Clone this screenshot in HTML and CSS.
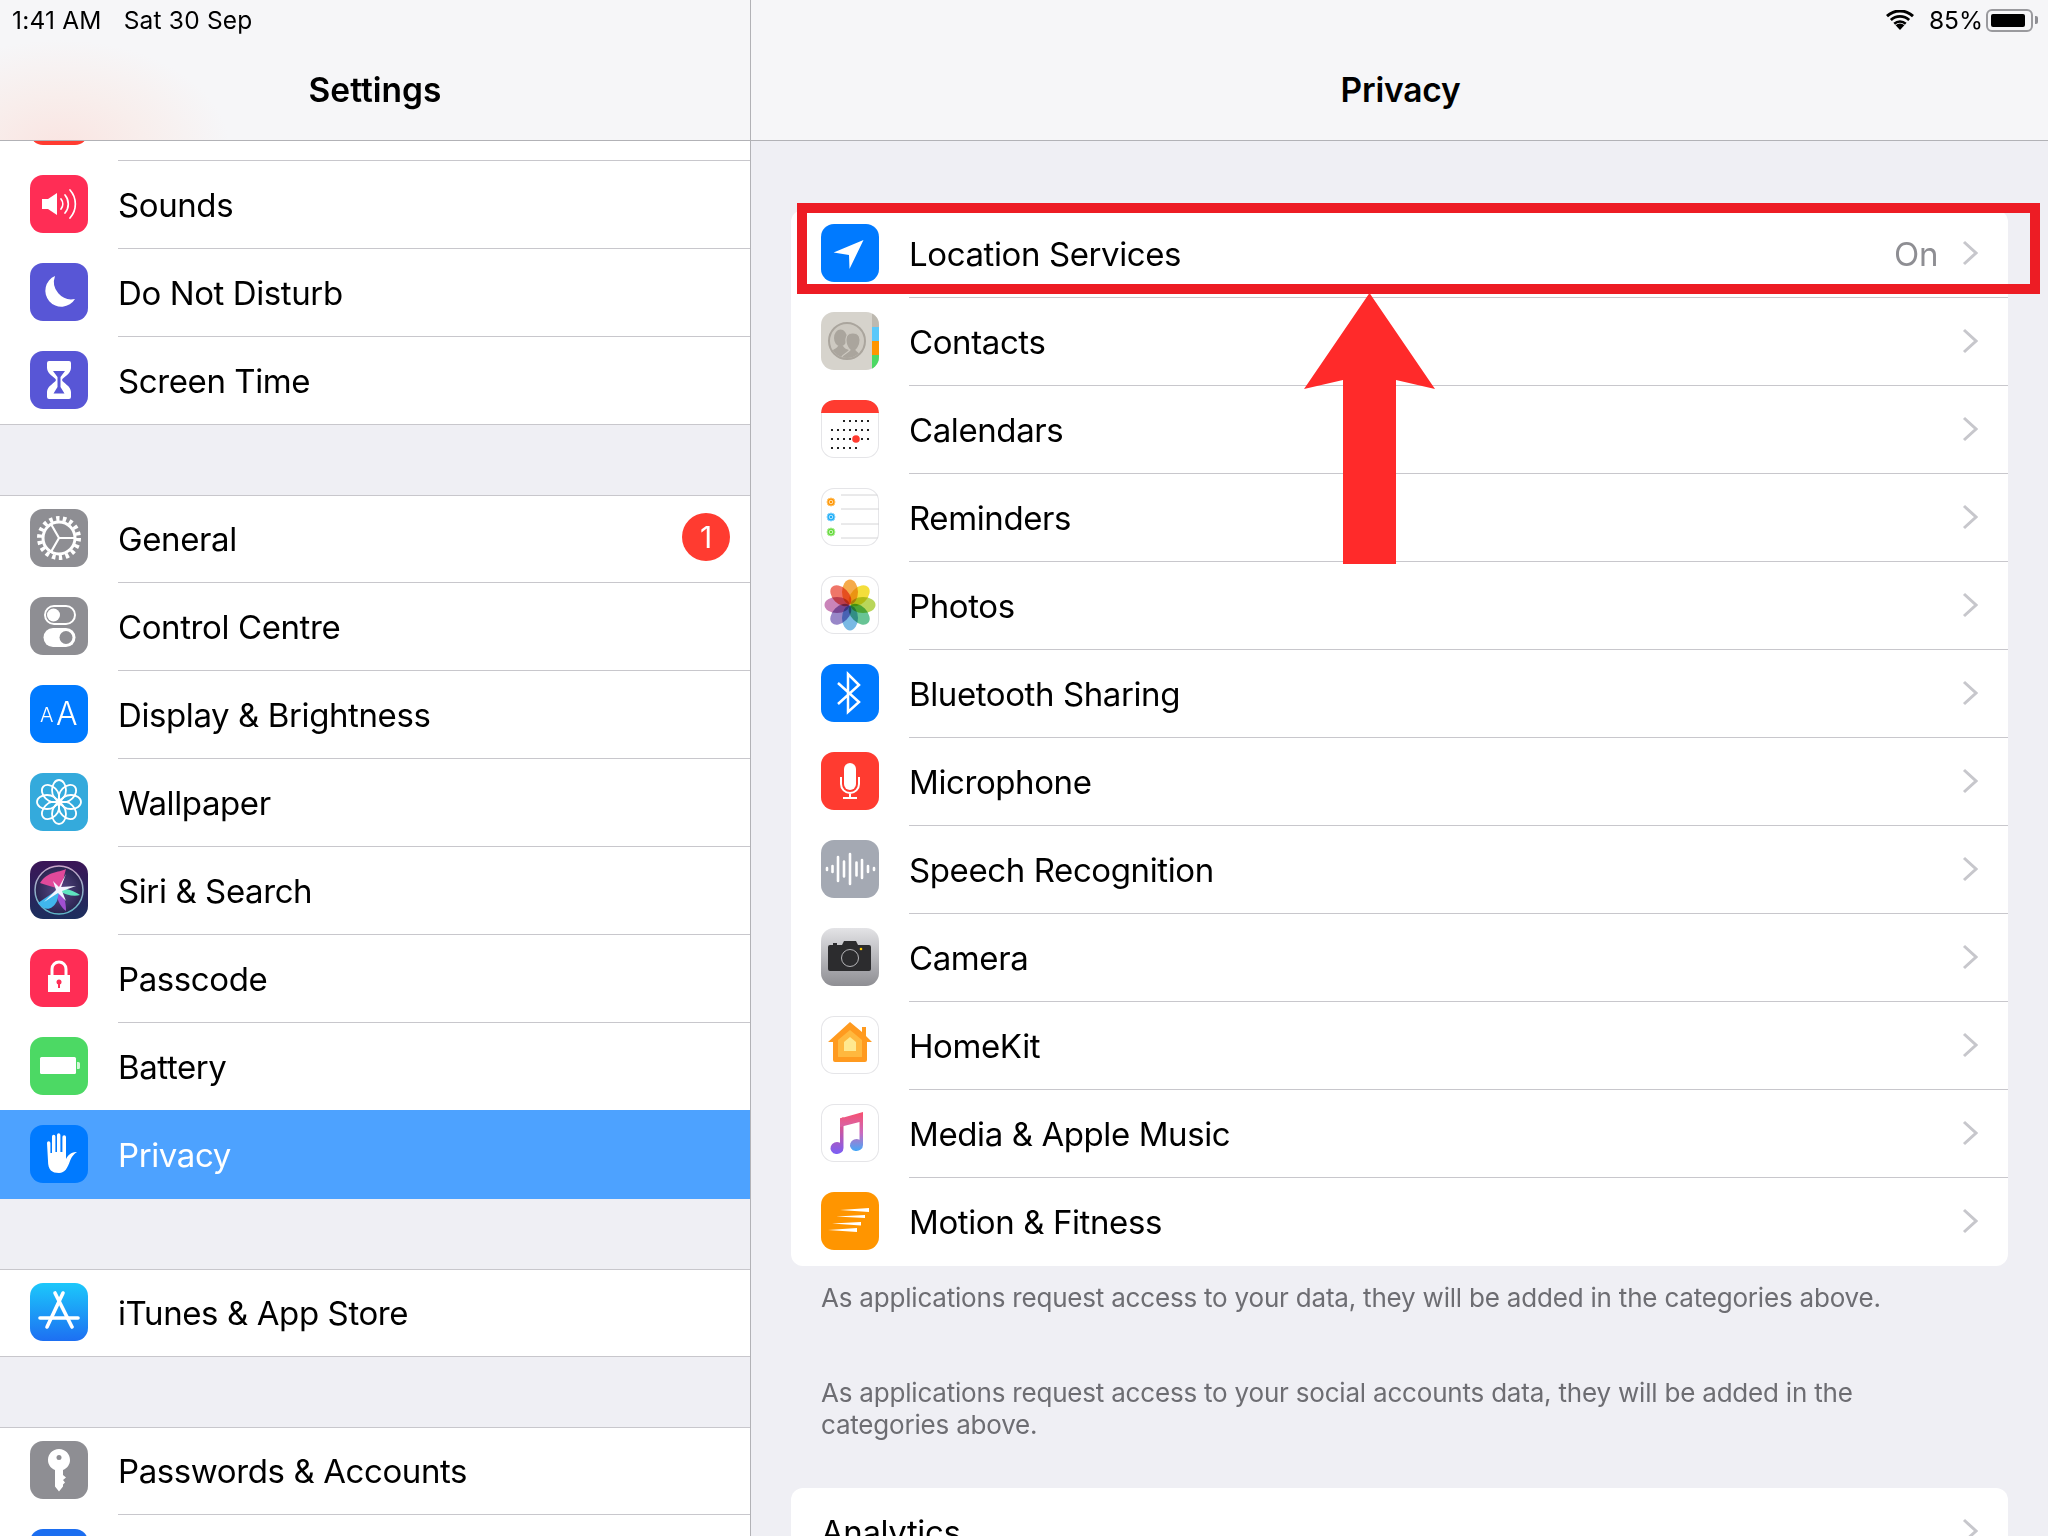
FILE: index.html
```html
<!DOCTYPE html>
<html lang="en">
<head>
<meta charset="utf-8">
<title>Settings - Privacy</title>
<link rel="stylesheet" href="styles.css">
</head>
<body>
<div class="statusbar">
  <div class="status-left"><span>1:41 AM</span><span>Sat 30 Sep</span></div>
  <div class="status-right">
    <svg class="wifi" viewBox="0 0 28 20"><path d="M14 20 L9.6 15.2 A6.5 6.5 0 0 1 18.4 15.2Z"/><path d="M7.4 12.8 A9.8 9.8 0 0 1 20.6 12.8 L18.9 14.7 A7.2 7.2 0 0 0 9.1 14.7Z"/><path d="M3.9 9 A15 15 0 0 1 24.1 9 L22.2 11 A12.2 12.2 0 0 0 5.8 11Z"/><path d="M0 5 A20.5 20.5 0 0 1 28 5 L26 7.2 A17.6 17.6 0 0 0 2 7.2Z"/></svg>
    <span class="pct">85%</span>
    <div class="battery"><div class="battery-level"></div></div>
    <div class="battery-nub"></div>
  </div>
</div>

<aside class="sidebar">
  <header class="navbar navbar-tint"><h1>Settings</h1></header>
  <div class="list">
    <section class="group">
      <div class="row"><div class="icon bg-red"></div><div class="row-body"></div></div>
      <div class="row"><div class="icon bg-pink"><svg viewBox="0 0 58 58"><path fill="#fff" d="M12 24h6l9-6v22l-9-6h-6z"/><g fill="none" stroke="#fff" stroke-width="1.7" stroke-linecap="round"><path d="M31 24a8 8 0 0 1 0 10"/><path d="M35 20a14 14 0 0 1 0 18"/><path d="M40 15a21 21 0 0 1 0 28"/></g></svg></div><div class="row-body"><span>Sounds</span></div></div>
      <div class="row"><div class="icon bg-indigo"><svg viewBox="0 0 58 58"><path fill="#fff" d="M25 13A16 16 0 1 0 45 36 A17.5 17.5 0 0 1 25 13z"/></svg></div><div class="row-body"><span>Do Not Disturb</span></div></div>
      <div class="row"><div class="icon bg-indigo"><svg viewBox="0 0 58 58"><path fill="#fff" d="M19 10h20a2 2 0 0 1 2 2v5c0 6-8 9-9 12 1 3 9 6 9 12v5a2 2 0 0 1-2 2H19a2 2 0 0 1-2-2v-5c0-6 8-9 9-12-1-3-9-6-9-12v-5a2 2 0 0 1 2-2z"/><path fill="#5856d6" d="M23 20h12l-4.500 6v10l4 6.500h-11l4-6.500V26z"/></svg></div><div class="row-body"><span>Screen Time</span></div></div>
    </section>

    <section class="group">
      <div class="row"><div class="icon bg-gray"><svg viewBox="0 0 58 58"><g fill="none" stroke="#fff"><circle cx="29" cy="29" r="19.500" stroke-width="5" stroke-dasharray="3.400 3.400"/><circle cx="29" cy="29" r="16" stroke-width="3"/><path stroke-width="2.200" d="M46 29H29L20.500 14.300M29 29l-8.500 14.700"/></g></svg></div><div class="row-body"><span>General</span><span class="badge">1</span></div></div>
      <div class="row"><div class="icon bg-gray"><svg viewBox="0 0 58 58"><rect x="15" y="9" width="30" height="18" rx="9" fill="none" stroke="#fff" stroke-width="2"/><circle cx="23.500" cy="18" r="6.500" fill="#fff"/><rect x="13.500" y="31" width="32" height="19" rx="9.500" fill="#fff"/><circle cx="36" cy="40.500" r="6.500" fill="#8e8e93"/></svg></div><div class="row-body"><span>Control Centre</span></div></div>
      <div class="row"><div class="icon bg-blue"><svg viewBox="0 0 58 58"><text class="aa-small" x="10" y="37">A</text><text class="aa-big" x="26" y="40">A</text></svg></div><div class="row-body"><span>Display &amp; Brightness</span></div></div>
      <div class="row"><div class="icon bg-sky"><svg viewBox="0 0 58 58"><g fill="none" stroke="#fff" stroke-width="1.800"><ellipse cx="29" cy="17" rx="7" ry="10"/><ellipse cx="29" cy="17" rx="7" ry="10" transform="rotate(45 29 29)"/><ellipse cx="29" cy="17" rx="7" ry="10" transform="rotate(90 29 29)"/><ellipse cx="29" cy="17" rx="7" ry="10" transform="rotate(135 29 29)"/><ellipse cx="29" cy="17" rx="7" ry="10" transform="rotate(180 29 29)"/><ellipse cx="29" cy="17" rx="7" ry="10" transform="rotate(225 29 29)"/><ellipse cx="29" cy="17" rx="7" ry="10" transform="rotate(270 29 29)"/><ellipse cx="29" cy="17" rx="7" ry="10" transform="rotate(315 29 29)"/></g><circle cx="29" cy="29" r="3" fill="#fff"/></svg></div><div class="row-body"><span>Wallpaper</span></div></div>
      <div class="row"><div class="icon bg-siri"><svg viewBox="0 0 58 58"><defs><linearGradient id="siriring" x1="0" y1="0" x2="0" y2="1"><stop offset="0" stop-color="#c9a6c9"/><stop offset="1" stop-color="#5fb6c6"/></linearGradient><radialGradient id="siridisc"><stop offset="0" stop-color="#5a4a88"/><stop offset="1" stop-color="#2a2450"/></radialGradient><filter id="soft"><feGaussianBlur stdDeviation="0.700"/></filter></defs><circle cx="29" cy="29" r="24" fill="url(#siridisc)" stroke="url(#siriring)" stroke-width="1.500"/><g filter="url(#soft)"><path fill="#e0489a" d="M10 22C18 10 28 12 36 8 33 18 33 24 30 28 23 26 16 24 10 22z"/><path fill="#a04fd0" d="M30 28C34 34 36 42 36 50 30 46 26 36 26 30z"/><path fill="#3fb6ec" d="M30 27L8 42C14 50 22 50 27 40z"/><path fill="#5fe4c0" d="M29 27C36 27 44 30 50 34 44 36 36 34 29 30z"/><path fill="#f2f5ff" d="M36 13L31 26 46 25 32 30 36 40 28 32 14 41 26 29 23 20 29 26z"/></g></svg></div><div class="row-body"><span>Siri &amp; Search</span></div></div>
      <div class="row"><div class="icon bg-pink"><svg viewBox="0 0 58 58"><path fill="none" stroke="#fff" stroke-width="3" d="M22 27v-7a7 7 0 0 1 14 0v7"/><rect x="18" y="26" width="22" height="17" fill="#fff"/><circle cx="29" cy="33" r="2.500" fill="#ff2d55"/><rect x="28" y="34" width="2" height="5" fill="#ff2d55"/></svg></div><div class="row-body"><span>Passcode</span></div></div>
      <div class="row"><div class="icon bg-green"><svg viewBox="0 0 58 58"><rect x="10" y="20" width="36" height="17" rx="1.500" fill="#fff"/><path fill="#fff" opacity=".75" d="M47 25h1.500a1.500 1.500 0 0 1 1.500 1.500v4a1.500 1.500 0 0 1-1.500 1.500H47z"/></svg></div><div class="row-body"><span>Battery</span></div></div>
      <div class="row row-selected"><div class="icon bg-blue"><svg viewBox="0 0 58 58"><path fill="#fff" d="M17 18a1.700 1.700 0 0 1 3.400 0V28H22V11.500a1.700 1.700 0 0 1 3.400 0V27H27V10a1.700 1.700 0 0 1 3.400 0V27h2V12a1.800 1.800 0 0 1 3.600 0V34c1.500-3 5-7.500 11-7-3 2-5 4-7 9-2.500 7-5 12-11 12-7 0-11-3-11-12z"/></svg></div><div class="row-body"><span>Privacy</span></div></div>
    </section>

    <section class="group">
      <div class="row"><div class="icon bg-appstore"><svg viewBox="0 0 58 58"><g stroke="#fff" stroke-width="3.600" stroke-linecap="round" fill="none"><path d="M10 35h38"/><path d="M33 10L17 44"/><path d="M25 10l17 34"/></g></svg></div><div class="row-body"><span>iTunes &amp; App Store</span></div></div>
    </section>

    <section class="group">
      <div class="row"><div class="icon bg-gray"><svg viewBox="0 0 58 58"><path fill="#fff" d="M29 8c6.500 0 11 5 11 11 0 4.500-2.500 8-7 10v5l3 2.500-3 2.500 2 2.500-2 2v2l-4 5-4-5V29c-4.500-2-7-5.500-7-10 0-6 4.500-11 11-11z"/><circle cx="29" cy="16.500" r="2.500" fill="#8e8e93"/></svg></div><div class="row-body"><span>Passwords &amp; Accounts</span></div></div>
      <div class="row"><div class="icon bg-mail"></div><div class="row-body"></div></div>
    </section>
  </div>
</aside>

<main class="pane">
  <header class="navbar"><h1>Privacy</h1></header>
  <div class="pane-content">
    <section class="card">
      <div class="row"><div class="icon bg-blue"><svg viewBox="0 0 58 58"><path fill="#fff" d="M42.500 16L12.600 28.500 28 31 28.500 45z"/></svg></div><div class="row-body"><span>Location Services</span><span class="value">On</span><svg class="chevron" viewBox="0 0 16 26"><path d="M2 2l12 11L2 24"/></svg></div></div>
      <div class="row"><div class="icon bg-contacts"><svg viewBox="0 0 58 58"><defs><clipPath id="disc"><circle cx="26" cy="29" r="17"/></clipPath></defs><rect x="51" width="7" height="15" fill="#bdb9b0"/><rect x="51" y="15" width="7" height="14" fill="#5ac8fa"/><rect x="51" y="29" width="7" height="14" fill="#ff9500"/><rect x="51" y="43" width="7" height="15" fill="#4cd964"/><circle cx="26" cy="29" r="18" fill="#cdc9c1" stroke="#aaa59d" stroke-width="2"/><g clip-path="url(#disc)" fill="#aaa59d"><ellipse cx="19.500" cy="26" rx="6.500" ry="8.500"/><path d="M6 43c2-5 9-5 11-9h5c1 2 3 3 6 4l-8 10z"/><g stroke="#cdc9c1" stroke-width="1.200"><path d="M19 49c1-7 8-8 10-11-2-2-4.500-6-4-11 .5-8 13-8 14 0 .5 5-2 9-4 11 2 3 8 4 10 11z"/></g></g></svg></div><div class="row-body"><span>Contacts</span><svg class="chevron" viewBox="0 0 16 26"><path d="M2 2l12 11L2 24"/></svg></div></div>
      <div class="row"><div class="icon bg-white"><svg viewBox="0 0 58 58"><path fill="#ff3b30" d="M0 13V13A13 13 0 0 1 13 0H45A13 13 0 0 1 58 13z"/><g stroke="#222" stroke-width="2" stroke-dasharray="2 4"><path d="M22 21H50"/><path d="M10 30H50"/><path d="M10 39H50"/><path d="M10 48H36"/></g><circle cx="35" cy="39" r="3.800" fill="#ff3b30"/></svg></div><div class="row-body"><span>Calendars</span><svg class="chevron" viewBox="0 0 16 26"><path d="M2 2l12 11L2 24"/></svg></div></div>
      <div class="row"><div class="icon bg-white"><svg viewBox="0 0 58 58"><g stroke="#d4d4d6" stroke-width="1"><path d="M20 7H58"/><path d="M20 21H58"/><path d="M20 36H58"/><path d="M20 50H58"/></g><circle cx="10" cy="14" r="4" fill="#ff9500" stroke="#ffc36b"/><circle cx="10" cy="14" r="1.800" fill="#ff9500" stroke="#fff" stroke-width=".7"/><circle cx="10" cy="29" r="4" fill="#1badf8" stroke="#8ad4fb"/><circle cx="10" cy="29" r="1.800" fill="#1badf8" stroke="#fff" stroke-width=".7"/><circle cx="10" cy="44" r="4" fill="#63da38" stroke="#b0ec9b"/><circle cx="10" cy="44" r="1.800" fill="#63da38" stroke="#fff" stroke-width=".7"/></svg></div><div class="row-body"><span>Reminders</span><svg class="chevron" viewBox="0 0 16 26"><path d="M2 2l12 11L2 24"/></svg></div></div>
      <div class="row"><div class="icon bg-white"><svg viewBox="0 0 58 58"><g class="petals"><ellipse cx="29" cy="16" rx="8" ry="12.500" fill="#f5a33a"/><ellipse cx="29" cy="16" rx="8" ry="12.500" fill="#f4dc2a" transform="rotate(45 29 29)"/><ellipse cx="29" cy="16" rx="8" ry="12.500" fill="#b3d34c" transform="rotate(90 29 29)"/><ellipse cx="29" cy="16" rx="8" ry="12.500" fill="#5bbf8c" transform="rotate(135 29 29)"/><ellipse cx="29" cy="16" rx="8" ry="12.500" fill="#6db3e2" transform="rotate(180 29 29)"/><ellipse cx="29" cy="16" rx="8" ry="12.500" fill="#8f7dc4" transform="rotate(225 29 29)"/><ellipse cx="29" cy="16" rx="8" ry="12.500" fill="#c67ab3" transform="rotate(270 29 29)"/><ellipse cx="29" cy="16" rx="8" ry="12.500" fill="#ee6a5c" transform="rotate(315 29 29)"/></g></svg></div><div class="row-body"><span>Photos</span><svg class="chevron" viewBox="0 0 16 26"><path d="M2 2l12 11L2 24"/></svg></div></div>
      <div class="row"><div class="icon bg-blue"><svg viewBox="0 0 58 58"><path fill="none" stroke="#fff" stroke-width="2.500" d="M17 19l21 19-11 10V10l11 11-21 19"/></svg></div><div class="row-body"><span>Bluetooth Sharing</span><svg class="chevron" viewBox="0 0 16 26"><path d="M2 2l12 11L2 24"/></svg></div></div>
      <div class="row"><div class="icon bg-red"><svg viewBox="0 0 58 58"><rect x="23" y="11" width="12" height="27" rx="6" fill="#fff"/><path fill="none" stroke="#fff" stroke-width="2" d="M20 25v7a9 9 0 0 0 18 0v-7M29 41v5M22 46h14"/></svg></div><div class="row-body"><span>Microphone</span><svg class="chevron" viewBox="0 0 16 26"><path d="M2 2l12 11L2 24"/></svg></div></div>
      <div class="row"><div class="icon bg-speech"><svg viewBox="0 0 58 58"><path fill="none" stroke="#fff" stroke-width="2.600" stroke-linecap="round" d="M6 28v2M11.500 26v6M17 17v24M23 21.500v15M29 14v30M35.500 22.500v13M41 20v18M47 26v6M53 28v2"/></svg></div><div class="row-body"><span>Speech Recognition</span><svg class="chevron" viewBox="0 0 16 26"><path d="M2 2l12 11L2 24"/></svg></div></div>
      <div class="row"><div class="icon bg-camera"><svg viewBox="0 0 58 58"><path fill="#2c2c2e" d="M9 17h3v-2h4v2h5l2-4h12l2 4h11a2 2 0 0 1 2 2v22a2 2 0 0 1-2 2H9a2 2 0 0 1-2-2V19a2 2 0 0 1 2-2z"/><circle cx="29" cy="30" r="8.500" fill="none" stroke="#b5b5b8" stroke-width="1"/><circle cx="40" cy="21" r="1.300" fill="#ffcc00"/></svg></div><div class="row-body"><span>Camera</span><svg class="chevron" viewBox="0 0 16 26"><path d="M2 2l12 11L2 24"/></svg></div></div>
      <div class="row"><div class="icon bg-white"><svg viewBox="0 0 58 58"><path fill="#ff9a1f" d="M29 6L41 16V11h4v9l6 6h-5v18a2 2 0 0 1-2 2H14a2 2 0 0 1-2-2V26H7z"/><path fill="#ffb83e" d="M29 14L41 24V41H17V24z"/><path fill="#ffe98f" d="M29 21L35 26V35H23V26z"/></svg></div><div class="row-body"><span>HomeKit</span><svg class="chevron" viewBox="0 0 16 26"><path d="M2 2l12 11L2 24"/></svg></div></div>
      <div class="row"><div class="icon bg-white"><svg viewBox="0 0 58 58"><defs><linearGradient id="noteL" x1="0" y1="0" x2="0" y2="1"><stop offset="0" stop-color="#f9506e"/><stop offset="1" stop-color="#7a5ff6"/></linearGradient><linearGradient id="noteR" x1="0" y1="0" x2="0" y2="1"><stop offset="0" stop-color="#f9506e"/><stop offset=".55" stop-color="#c86bc0"/><stop offset="1" stop-color="#43a8f8"/></linearGradient></defs><path fill="url(#noteL)" d="M19 14.500L22.500 13V44a6.500 6 0 1 1-3.500-5.300z"/><path fill="url(#noteR)" d="M19 14.500L42 8V41a6.500 6 0 1 1-3.500-5.300V18L19 23z"/></svg></div><div class="row-body"><span>Media &amp; Apple Music</span><svg class="chevron" viewBox="0 0 16 26"><path d="M2 2l12 11L2 24"/></svg></div></div>
      <div class="row"><div class="icon bg-orange"><svg viewBox="0 0 58 58"><path fill="#fff" d="M19 18L48 16V20zM15 24.500L44 23V26zM11 31.500L40 30V33.500zM7 38L36 36V40z"/></svg></div><div class="row-body"><span>Motion &amp; Fitness</span><svg class="chevron" viewBox="0 0 16 26"><path d="M2 2l12 11L2 24"/></svg></div></div>
    </section>
    <p class="note note-first">As applications request access to your data, they will be added in the categories above.</p>
    <p class="note note-second">As applications request access to your social accounts data, they will be added in the categories above.</p>
    <section class="card card-plain">
      <div class="row"><div class="row-body"><span>Analytics</span><svg class="chevron" viewBox="0 0 16 26"><path d="M2 2l12 11L2 24"/></svg></div></div>
    </section>
  </div>
  <div class="callout"></div>
  <svg class="arrow" viewBox="0 0 131 271"><path d="M65.500 0L131 96 92 87V271H39V87L0 96z"/></svg>
</main>
</body>
</html>
```

FILE: styles.css
```css
* { box-sizing: border-box; }
html, body { margin: 0; height: 100%; }
body {
  display: flex;
  position: relative;
  width: 2048px;
  height: 1536px;
  overflow: hidden;
  background: #efeff4;
  color: #000;
  font-family: Inter, "Liberation Sans", sans-serif;
  font-size: 33px;
  letter-spacing: -0.4px;
}

.statusbar {
  position: absolute;
  top: 0;
  left: 0;
  right: 0;
  z-index: 5;
  height: 40px;
  padding: 0 10px 0 12px;
  display: flex;
  align-items: center;
  justify-content: space-between;
  font-size: 24.500px;
  letter-spacing: 0;
}
.status-left { display: flex; gap: 22px; letter-spacing: .2px; }
.status-right { display: flex; align-items: center; }
.wifi { width: 28px; height: 20px; margin-right: 15px; }
.pct { margin-right: 3px; letter-spacing: 0; }
.battery {
  width: 47px;
  height: 23px;
  padding: 3px;
  border: 2px solid #9a9a9e;
  border-radius: 6px;
}
.battery-level { width: 34px; height: 100%; background: #000; border-radius: 2px; }
.battery-nub { width: 3px; height: 8px; margin-left: 2px; background: #8e8e93; border-radius: 0 2px 2px 0; }

.navbar {
  position: absolute;
  top: 0;
  left: 0;
  right: 0;
  z-index: 2;
  height: 141px;
  background: #f6f6f8;
  border-bottom: 1px solid #b2b2b6;
}
.navbar-tint {
  background: radial-gradient(ellipse 170px 110px at 60px 150px, #fae4e1 0%, #f8eeec 50%, #f6f6f8 100%);
}
.navbar h1 {
  margin: 0;
  padding-top: 70px;
  font-size: 33.500px;
  line-height: 40px;
  font-weight: 600;
  letter-spacing: 0;
  text-align: center;
}
.pane .navbar h1 { padding-left: 2px; letter-spacing: -0.2px; }

.sidebar {
  position: relative;
  flex: none;
  width: 751px;
  height: 100%;
  border-right: 1px solid #b2b2b6;
  background: #efeff4;
}
.list { padding-top: 73px; }
.group {
  margin-bottom: 70px;
  background: #fff;
  box-shadow: inset 0 1px #c8c7cc, inset 0 -1px #c8c7cc;
}

.row {
  display: flex;
  height: 88px;
  padding-left: 30px;
}
.icon {
  flex: none;
  width: 58px;
  height: 58px;
  margin: 14px 30px 0 0;
  border-radius: 13px;
  overflow: hidden;
}
.icon svg { display: block; width: 58px; height: 58px; }
.row-body {
  flex: 1;
  display: flex;
  align-items: center;
  min-width: 0;
  padding-right: 20px;
  border-bottom: 1px solid #c8c7cc;
}
.row-body > span:first-child { flex: 1; }
.row:last-child .row-body { border-bottom: 0; }
.row-selected { position: relative; background: #4da2ff; box-shadow: 0 -1px #4da2ff; color: #fff; }
.row-selected .row-body { border-bottom: 0; }

.badge {
  width: 48px;
  height: 48px;
  margin-top: -4px;
  border-radius: 50%;
  background: #ff3b30;
  color: #fff;
  font-size: 30px;
  line-height: 48px;
  text-align: center;
}

.bg-red { background: #ff3b30; }
.bg-pink { background: #ff2d55; }
.bg-indigo { background: #5856d6; }
.bg-gray { background: #8e8e93; }
.bg-blue { background: #007aff; }
.bg-sky { background: #34aadc; }
.bg-green { background: #4cd964; }
.bg-orange { background: #ff9500; }
.bg-mail { background: #1c6ef0; }
.bg-siri { background: linear-gradient(#3b1557, #1c2f5e); }
.bg-appstore { background: linear-gradient(#1cc8fb, #1d6ff2); }
.bg-contacts { background: #d6d3cc; }
.bg-speech { background: #a4a9b3; }
.bg-camera { background: linear-gradient(#e3e3e6, #8e8e93); }
.bg-white { background: #fff; box-shadow: inset 0 0 0 1px #e5e5e8; }
.aa-small { fill: #fff; font-size: 20px; font-weight: 300; font-family: Inter, sans-serif; }
.aa-big { fill: #fff; font-size: 32px; font-weight: 300; font-family: Inter, sans-serif; }
.petals ellipse { mix-blend-mode: multiply; opacity: .92; }

.pane {
  position: relative;
  flex: 1;
  height: 100%;
}
.pane-content { padding: 210px 40px 0; }
.card {
  background: #fff;
  border-radius: 12px;
  overflow: hidden;
}
.card .row-body { padding-right: 30px; }
.value { margin-right: 24px; color: #8e8e93; }
.chevron {
  flex: none;
  width: 16px;
  height: 26px;
  margin-top: -2px;
  fill: none;
  stroke: #c7c7cc;
  stroke-width: 3;
}
.note {
  margin: 0;
  padding-left: 30px;
  max-width: 1140px;
  font-size: 26px;
  line-height: 32px;
  letter-spacing: -0.2px;
  color: #6d6d72;
}
.note-first { padding-top: 16px; }
.note-second { padding-top: 63px; margin-bottom: 47px; }

.callout {
  position: absolute;
  z-index: 3;
  left: 46px;
  top: 203px;
  width: 1243px;
  height: 91px;
  border: 10px solid #ed1c24;
}
.arrow {
  position: absolute;
  z-index: 4;
  left: 553px;
  top: 293px;
  width: 131px;
  height: 271px;
  fill: #ff2a2a;
}
```
